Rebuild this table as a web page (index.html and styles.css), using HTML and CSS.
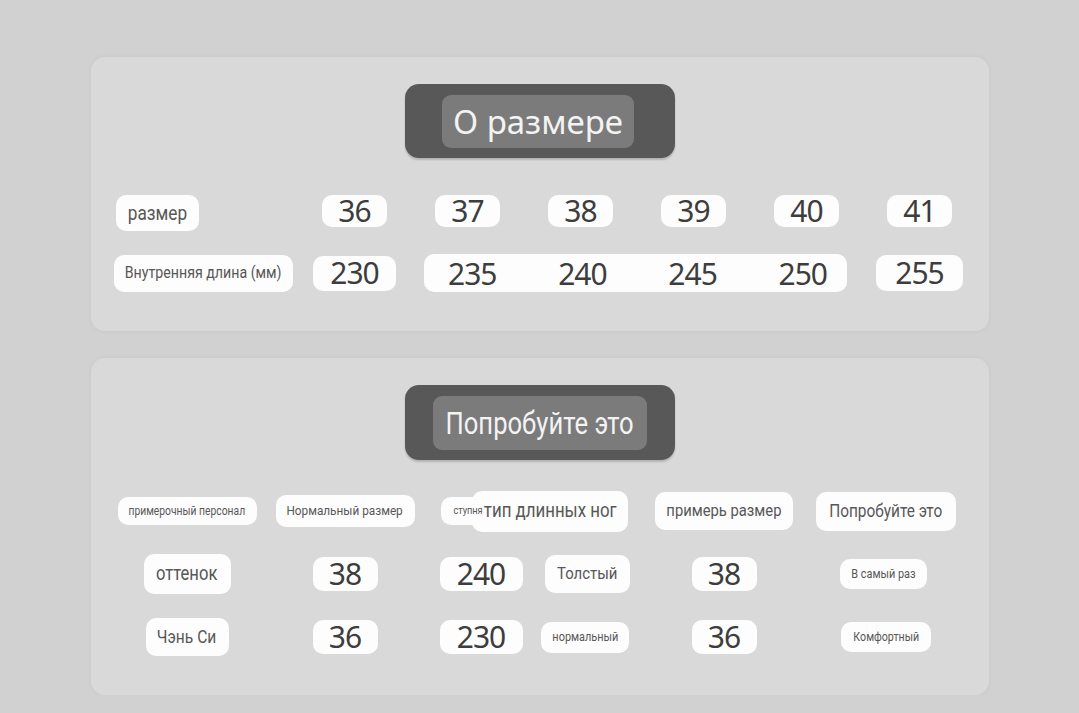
FILE: index.html
```html
<!DOCTYPE html>
<html lang="ru">
<head>
<meta charset="utf-8">
<title>О размере</title>
<link rel="stylesheet" href="styles.css">
</head>
<body>
<main class="page">
  <section class="card card-top">
    <div class="head"><div class="head-in head-in-a"><span class="head-txt">О размере</span></div></div>
    <div class="size-grid">
      <div class="pill lbl l-razmer"><span>размер</span></div>
      <div class="pill num n2 n-top">36</div>
      <div class="pill num n2 n-top">37</div>
      <div class="pill num n2 n-top">38</div>
      <div class="pill num n2 n-top">39</div>
      <div class="pill num n2 n-top">40</div>
      <div class="pill num n2 n-top">41</div>
      <div class="pill lbl l-inner"><span>Внутренняя длина (мм)</span></div>
      <div class="pill num n3">230</div>
      <div class="pill num-group"><span>235</span><span>240</span><span>245</span><span>250</span></div>
      <div class="pill num n3 n-last">255</div>
    </div>
  </section>

  <section class="card card-bottom">
    <div class="head head-b"><div class="head-in head-in-b"><span class="head-txt narrow">Попробуйте это</span></div></div>
    <div class="try-grid">
      <div class="pill lbl staff"><span>примерочный персонал</span></div>
      <div class="pill lbl normal-size"><span>Нормальный размер</span></div>
      <div class="foot-group">
        <div class="pill lbl foot"><span>ступня</span></div>
        <div class="pill lbl long-legs"><span>тип длинных ног</span></div>
      </div>
      <div class="pill lbl try-size"><span>примерь размер</span></div>
      <div class="pill lbl try-it"><span>Попробуйте это</span></div>

      <div class="pill lbl tone"><span>оттенок</span></div>
      <div class="pill num n2 nb">38</div>
      <div class="pill num n3 nb">240</div>
      <div class="pill lbl thick"><span>Толстый</span></div>
      <div class="pill num n2 nb">38</div>
      <div class="pill lbl just-right"><span>В самый раз</span></div>

      <div class="pill lbl name"><span>Чэнь Си</span></div>
      <div class="pill num n2 nb">36</div>
      <div class="pill num n3 nb">230</div>
      <div class="pill lbl normal"><span>нормальный</span></div>
      <div class="pill num n2 nb">36</div>
      <div class="pill lbl comfy"><span>Комфортный</span></div>
    </div>
  </section>
</main>
</body>
</html>
```
FILE: styles.css
```css
* { box-sizing: border-box; }

body {
  margin: 0;
  background: #d1d1d1;
  font-family: "Noto Sans", "Roboto", sans-serif;
  color: #3a3a3a;
}

.page {
  width: 898px;
  margin-left: 91px;
  padding-top: 57px;
  display: flex;
  flex-direction: column;
  gap: 27px;
}

.card {
  background: #d9d9d9;
  border-radius: 14px;
  box-shadow: 0 0 5px rgba(0, 0, 0, 0.05);
  display: flex;
  flex-direction: column;
}

.card-top { padding: 27px 0 38px; }
.card-bottom { padding: 27px 0 37px; }

.head {
  align-self: center;
  width: 270px;
  height: 74px;
  background: #585858;
  border-radius: 14px;
  box-shadow: 0 2px 2px rgba(0, 0, 0, 0.18);
  display: flex;
  align-items: center;
  justify-content: center;
}

.head-b { height: 75px; }

.head-in {
  background: #7b7b7b;
  border-radius: 9px;
  display: flex;
  align-items: center;
  justify-content: center;
}

.head-in-a { width: 192px; height: 53px; margin-right: 4px; }
.head-in-b { width: 214px; height: 54px; }

.head-txt {
  color: #f3f3f3;
  font-size: 33px;
  line-height: 1;
  white-space: nowrap;
}

.narrow {
  display: inline-block;
  font-family: "Roboto", sans-serif;
  font-size: 32px;
  transform: scaleX(0.8);
}

.pill {
  background: #fdfdfd;
  border-radius: 10px;
  display: flex;
  align-items: center;
  justify-content: center;
  white-space: nowrap;
}

.lbl {
  font-family: "Roboto", sans-serif;
  color: #575757;
  line-height: 1;
}

.lbl span {
  display: inline-block;
  flex: none;
  transform: scaleX(0.86);
}

.num {
  font-size: 30px;
  letter-spacing: -1px;
  color: #3d3d3d;
  line-height: 1;
}

.n2 { width: 65px; height: 32px; }
.n3 { width: 83px; height: 35px; }
.n-last { width: 87px; height: 36px; }
.nb { height: 34px; }
.n-top { margin-bottom: 4px; }

/* top grid */
.size-grid {
  margin-top: 35px;
  margin-left: 23px;
  display: grid;
  grid-template-columns: 184px repeat(6, 113px);
  grid-template-rows: 40px 40px;
  row-gap: 20px;
  align-items: center;
  justify-items: center;
}

.l-razmer {
  justify-self: start;
  margin-left: 2px;
  width: 83px;
  height: 36px;
  font-size: 20px;
}

.l-inner {
  justify-self: start;
  width: 179px;
  height: 37px;
  font-size: 16.5px;
}

.num-group {
  grid-column: span 4;
  justify-self: stretch;
  margin: 0 16px 0 13px;
  height: 38px;
  justify-content: space-between;
  padding: 0 20px 0 24px;
  font-size: 30px;
  letter-spacing: -1px;
  color: #3d3d3d;
}

/* bottom grid */
.try-grid {
  margin-top: 30px;
  margin-left: 17px;
  display: grid;
  grid-template-columns: 158px 158px 114px 98px 176px 148px;
  grid-template-rows: repeat(3, 42px);
  row-gap: 21px;
  align-items: center;
  justify-items: center;
}

.staff { width: 139px; height: 28px; font-size: 12px; }
.normal-size { width: 139px; height: 32px; font-size: 13.7px; }
.foot { width: 54px; height: 28px; font-size: 10.7px; }
.long-legs { width: 156px; height: 41px; font-size: 19.6px; margin-left: -23px; }
.try-size { width: 138px; height: 38px; font-size: 17.2px; }
.try-it { width: 140px; height: 39px; font-size: 17.9px; }
.tone { width: 87px; height: 40px; font-size: 19.3px; }
.thick { width: 85px; height: 38px; font-size: 17.4px; }
.just-right { width: 87px; height: 30px; font-size: 12.7px; margin-left: -5px; }
.name { width: 83px; height: 38px; font-size: 18.1px; }
.normal { width: 88px; height: 31px; font-size: 12.7px; margin-right: 4px; }
.comfy { width: 90px; height: 30px; font-size: 12.4px; }

.foot-group {
  grid-column: 3 / span 2;
  justify-self: start;
  margin-left: 17px;
  display: flex;
  align-items: center;
}
```
